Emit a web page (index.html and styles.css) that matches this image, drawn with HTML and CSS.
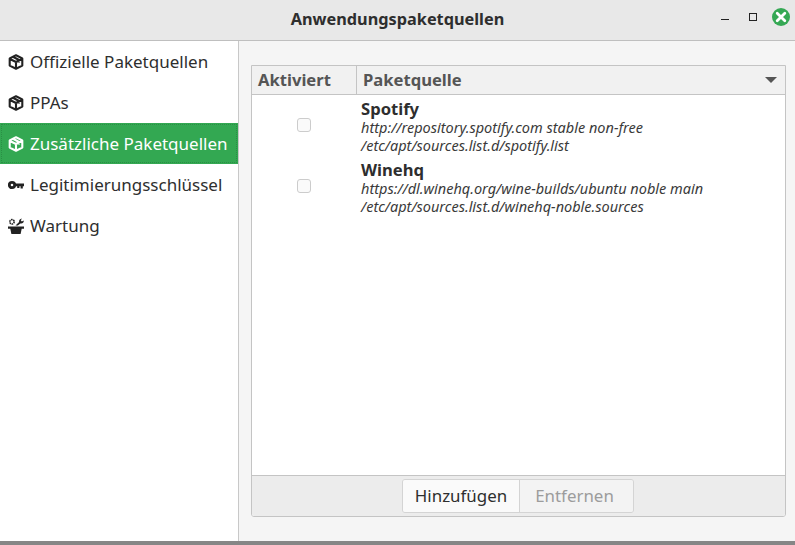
FILE: index.html
```html
<!DOCTYPE html>
<html lang="de">
<head>
<meta charset="utf-8">
<title>Anwendungspaketquellen</title>
<link rel="stylesheet" href="styles.css">
</head>
<body>
<div class="window">
  <header class="titlebar">
    <h1 class="title">Anwendungspaketquellen</h1>
    <div class="controls">
      <span class="min"></span>
      <span class="max"></span>
      <span class="close"><svg width="12" height="12" viewBox="0 0 12 12"><path d="M2.200 2.200l7.600 7.600M9.800 2.200l-7.600 7.600" stroke="#fff" stroke-width="2.800" stroke-linecap="round"/></svg></span>
    </div>
  </header>
  <div class="body">
    <nav class="sidebar">
      <div class="nav-item">
        <svg class="icon" viewBox="0 0 16 16"><path class="box" d="M8 1.200l6.300 3.200v7.200L8 14.800l-6.300-3.200V4.400zM2 5l6 3 6-3M8 8v6.500M5 2.800l6 3.200v2.500"/></svg>
        <span>Offizielle Paketquellen</span>
      </div>
      <div class="nav-item">
        <svg class="icon" viewBox="0 0 16 16"><path class="box" d="M8 1.200l6.300 3.200v7.200L8 14.800l-6.300-3.200V4.400zM2 5l6 3 6-3M8 8v6.500M5 2.800l6 3.200v2.500"/></svg>
        <span>PPAs</span>
      </div>
      <div class="nav-item selected">
        <svg class="icon" viewBox="0 0 16 16"><path class="box" d="M8 1.200l6.300 3.200v7.200L8 14.800l-6.300-3.200V4.400zM2 5l6 3 6-3M8 8v6.500M5 2.800l6 3.200v2.500"/></svg>
        <span>Zusätzliche Paketquellen</span>
      </div>
      <div class="nav-item">
        <svg class="icon" viewBox="0 0 16 16"><circle cx="4" cy="8" r="2.700" fill="none" stroke="#222" stroke-width="2.800"/><path d="M6.500 6.500H16v2.800h-1.200v2.200h-2.200V9.300h-1.200v1.700H9.200V9.300H6.500z" fill="#222"/></svg>
        <span>Legitimierungsschlüssel</span>
      </div>
      <div class="nav-item">
        <svg class="icon" viewBox="0 0 16 16"><path d="M0 8.500h16v2.300h-2.300L12.600 16H3.400L2.300 10.800H0z" fill="#222"/><circle cx="4" cy="3.800" r="2.200" fill="none" stroke="#222" stroke-width="1.600" stroke-dasharray="1.500 .6"/><path d="M7.500 7.500l3.600-3.400C10.700 2.500 11.800.5 14 .4l-1.200 1.900 1 1.200 2-1c.2 2-1.700 3.500-3.400 2.900L9.800 7.500z" fill="#222"/></svg>
        <span>Wartung</span>
      </div>
    </nav>
    <main class="content">
      <section class="frame">
        <div class="thead">
          <div class="th th-active">Aktiviert</div>
          <div class="th th-source">Paketquelle<span class="sort"></span></div>
        </div>
        <div class="list">
          <div class="row">
            <div class="cell-check"><span class="check"></span></div>
            <div class="cell-text">
              <div class="name">Spotify</div>
              <div class="detail">http://repository.spotify.com stable non-free</div>
              <div class="detail">/etc/apt/sources.list.d/spotify.list</div>
            </div>
          </div>
          <div class="row">
            <div class="cell-check"><span class="check"></span></div>
            <div class="cell-text">
              <div class="name">Winehq</div>
              <div class="detail">https://dl.winehq.org/wine-builds/ubuntu noble main</div>
              <div class="detail">/etc/apt/sources.list.d/winehq-noble.sources</div>
            </div>
          </div>
        </div>
        <div class="toolbar">
          <div class="btn-group">
            <button class="btn">Hinzufügen</button>
            <button class="btn disabled">Entfernen</button>
          </div>
        </div>
      </section>
    </main>
  </div>
  <div class="edge"></div>
</div>
</body>
</html>
```
FILE: styles.css
```css
* { box-sizing: border-box; }
html, body { margin: 0; height: 100%; overflow: hidden; }
body { font-family: "Noto Sans", sans-serif; font-size: 16px; color: #2e2e2e; background: #f5f5f5; }
.window { height: 545px; display: flex; flex-direction: column; }
.titlebar { height: 41px; flex: none; background: #e8e8e8; border-bottom: 1px solid #bfbfbf; position: relative; display: flex; align-items: center; justify-content: center; }
.title { margin: 0 0 3px; font-size: 16.300px; font-weight: 700; color: #2e2e2e; }
.controls { position: absolute; top: 0; right: 0; height: 34px; display: flex; align-items: center; padding-right: 5px; }
.min { width: 8px; height: 1px; background: #222; margin-right: 20px; margin-top: 5px; }
.max { width: 8px; height: 8px; border: 1px solid #222; margin-right: 15px; }
.close { width: 18px; height: 18px; border-radius: 50%; background: #35a854; display: flex; align-items: center; justify-content: center; }
.body { flex: 1; display: flex; min-height: 0; }
.sidebar { width: 239px; flex: none; background: #fff; border-right: 1px solid #c8c8c8; }
.nav-item { height: 41px; display: flex; align-items: center; gap: 6px; padding-left: 8px; font-size: 17px; white-space: nowrap; }
.nav-item .icon { width: 16px; height: 16px; flex: none; }
.box { fill: none; stroke: #222; stroke-width: 2.100; stroke-linejoin: round; }
.selected { background: #33a852; color: #fff; outline: 1px dotted #2a8f45; outline-offset: -2px; }
.selected .box { stroke: #fff; }
.content { flex: 1; padding: 24px 9px 24px 12px; min-width: 0; }
.frame { height: 452px; border: 1px solid #c4c4c4; border-radius: 0 0 3px 3px; display: flex; flex-direction: column; background: #fff; overflow: hidden; }
.thead { height: 29px; flex: none; display: flex; background: #f1f1f1; border-bottom: 1px solid #c4c4c4; font-weight: 700; color: #555; font-size: 16.600px; }
.th { display: flex; align-items: center; padding: 0 0 2px 6px; }
.th-active { width: 105px; border-right: 1px solid #c4c4c4; }
.th-source { flex: 1; position: relative; }
.sort { position: absolute; right: 8px; top: 11px; width: 0; height: 0; border-left: 6px solid transparent; border-right: 6px solid transparent; border-top: 6px solid #555; }
.list { flex: 1; padding-top: 4px; }
.row { display: flex; height: 61px; }
.cell-check { width: 105px; display: flex; align-items: flex-start; justify-content: center; padding-top: 19px; }
.check { width: 14px; height: 14px; border: 1px solid #ccc; border-radius: 3px; background: #fafafa; margin-left: -2px; }
.cell-text { padding-left: 4px; }
.name { font-weight: 700; font-size: 16.600px; line-height: 20px; color: #2e2e2e; }
.detail { font-style: italic; font-size: 14.500px; line-height: 17.500px; color: #3a3a3a; white-space: nowrap; }
.toolbar { height: 41px; flex: none; background: #ececec; border-top: 1px solid #c4c4c4; display: flex; align-items: center; justify-content: center; }
.btn-group { display: flex; height: 34px; margin-right: 1px; border: 1px solid #d4d4d4; border-radius: 3px; overflow: hidden; }
.btn { width: 116px; border: 0; background: #fafafa; font: inherit; font-size: 16.900px; color: #2e2e2e; padding: 0 0 2px; }
.btn.disabled { width: 114px; border-left: 1px solid #d4d4d4; background: #f3f3f3; color: #9c9c9c; padding-right: 4px; }
.edge { height: 4px; flex: none; background: #868686; }
```
